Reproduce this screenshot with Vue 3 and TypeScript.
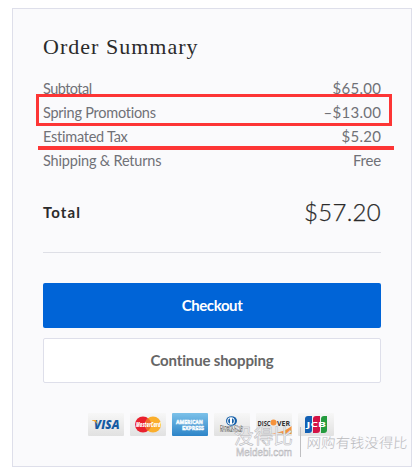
<script setup lang="ts">
interface Row {
  key: string
  label: string
  value: string
}

const rows: Row[] = [
  { key: 'subtotal', label: 'Subtotal', value: '$65.00' },
  { key: 'promo', label: 'Spring Promotions', value: '–$13.00' },
  { key: 'tax', label: 'Estimated Tax', value: '$5.20' },
  { key: 'shipping', label: 'Shipping & Returns', value: 'Free' },
]
</script>

<template>
  <main class="page">
    <section class="card">
      <h1 class="title">Order Summary</h1>
      <dl class="rows">
        <div v-for="row in rows" :key="row.key" class="row" :class="row.key">
          <dt>{{ row.label }}</dt>
          <dd>{{ row.value }}</dd>
        </div>
      </dl>
      <div class="total">
        <span class="total-label">Total</span>
        <span class="total-value">$57.20</span>
      </div>
      <button class="btn primary" type="button">Checkout</button>
      <button class="btn secondary" type="button">Continue shopping</button>
      <div class="payments">
        <svg class="pay" viewBox="0 0 36 23">
          <defs>
            <linearGradient id="plate" x1="0" y1="0" x2="0" y2="1">
              <stop offset="0" stop-color="#f7f7f7" />
              <stop offset="1" stop-color="#e1e1e1" />
            </linearGradient>
            <linearGradient id="amex" x1="0" y1="0" x2="0" y2="1">
              <stop offset="0" stop-color="#7cc1e9" />
              <stop offset="1" stop-color="#2c84c8" />
            </linearGradient>
          </defs>
          <rect width="36" height="23" rx="1" fill="url(#plate)" />
          <text x="6" y="16" textLength="25.500" lengthAdjust="spacingAndGlyphs" font-size="12" font-weight="800" font-style="italic" fill="#165ba3">VISA</text>
          <path d="M4 7h4l1.500 4.500C8 9.200 6.500 8 4 7.500z" fill="#f5a327" />
        </svg>
        <svg class="pay" viewBox="0 0 36 23">
          <rect width="36" height="23" rx="1" fill="url(#plate)" />
          <circle cx="13" cy="11.500" r="8" fill="#e9202e" />
          <circle cx="23" cy="11.500" r="8" fill="#faae2c" />
          <path d="M18 5.200a8 8 0 0 1 0 12.600a8 8 0 0 1 0-12.600z" fill="#ef6b2c" />
          <text x="6" y="14" textLength="24.500" lengthAdjust="spacingAndGlyphs" font-size="6.500" font-weight="800" font-style="italic" fill="#fff">MasterCard</text>
        </svg>
        <svg class="pay" viewBox="0 0 36 23">
          <rect width="36" height="23" rx="1" fill="url(#amex)" />
          <g font-size="6" font-weight="700" fill="#8cc3e8" stroke="#fff" stroke-width=".6">
            <text x="4" y="10.500" textLength="27" lengthAdjust="spacingAndGlyphs">AMERICAN</text>
            <text x="10" y="16.700" textLength="22" lengthAdjust="spacingAndGlyphs">EXPRESS</text>
          </g>
        </svg>
        <svg class="pay" viewBox="0 0 36 23">
          <rect width="36" height="23" rx="1" fill="url(#plate)" />
          <ellipse cx="17.500" cy="8" rx="5.500" ry="4.800" fill="#1760a9" />
          <circle cx="17" cy="8" r="3.800" fill="#fff" />
          <path d="M16 5.200a3 3 0 0 0 0 5.600zM18 5.200a3 3 0 0 1 0 5.600z" fill="#1760a9" />
          <g font-size="4.500" fill="#333">
            <text x="6" y="16" textLength="23" lengthAdjust="spacingAndGlyphs">Diners Club</text>
            <text x="6" y="19" font-size="3" textLength="23" lengthAdjust="spacingAndGlyphs">INTERNATIONAL</text>
          </g>
        </svg>
        <svg class="pay" viewBox="0 0 36 23">
          <rect width="36" height="23" rx="1" fill="url(#plate)" />
          <path d="M35.500 13v8H15c9-1.500 16-4 20.500-8z" fill="#f6933b" />
          <circle cx="17.500" cy="9.500" r="3" fill="#f6933b" />
          <g font-size="7.500" font-weight="700" fill="#333">
            <text x="1.500" y="12.500" textLength="13" lengthAdjust="spacingAndGlyphs">DISC</text>
            <text x="21" y="12.500" textLength="13" lengthAdjust="spacingAndGlyphs">VER</text>
          </g>
        </svg>
        <svg class="pay" viewBox="0 0 36 23">
          <rect width="36" height="23" rx="1" fill="url(#plate)" />
          <path d="M10 3h4v14q0 3-3 3H7V6q0-3 3-3z" fill="#1260b4" />
          <path d="M18 3h4v14q0 3-3 3h-4V6q0-3 3-3z" fill="#d31245" />
          <path d="M26 3h3v14q0 3-3 3h-3V6q0-3 3-3z" fill="#239b3e" />
          <text x="8.500" y="14" textLength="19.500" lengthAdjust="spacingAndGlyphs" font-size="6.500" font-weight="700" fill="#fff">JCB</text>
        </svg>
      </div>
    </section>
    <div class="mark-box"></div>
    <div class="mark-line"></div>
    <svg class="watermark" viewBox="0 0 186 38">
      <g class="wm">
        <text x="1" y="20" font-size="20" textLength="59" lengthAdjust="spacingAndGlyphs">没得比</text>
        <text x="3" y="32" font-size="11" textLength="56" lengthAdjust="spacingAndGlyphs">Meidebi.com</text>
      </g>
      <text class="slogan" x="75" y="24.500" textLength="101" lengthAdjust="spacingAndGlyphs" transform="skewX(-4)">网购有钱没得比</text>
      <path d="M67.500 3v30" stroke="#bfbfc2" />
    </svg>
  </main>
</template>

<style>
body {
  background: #fff;
}
</style>

<style scoped>
.page {
  position: relative;
  box-sizing: border-box;
  width: 420px;
  height: 476px;
  padding: 8px 8px 9px 12px;
  overflow: hidden;
  font-family: Lato, "Noto Sans CJK SC", sans-serif;
}
.card {
  box-sizing: border-box;
  display: flex;
  flex-direction: column;
  width: 400px;
  height: 459px;
  padding: 25px 30px 0;
  border: 1px solid #dedfea;
  background: #fafafc;
}
.title {
  margin: 0;
  height: 26px;
  font: 400 22px/26px "Liberation Serif", serif;
  letter-spacing: 1.02px;
  white-space: nowrap;
  color: #2b2b2b;
}
.rows {
  margin: 16px 0 0;
}
.row {
  display: flex;
  justify-content: space-between;
  align-items: baseline;
  height: 24px;
  font-size: 14.5px;
  line-height: 24px;
  color: #707177;
}
.row dt,
.row dd {
  margin: 0;
  white-space: nowrap;
}
.row dt {
  letter-spacing: -0.25px;
}
.row.subtotal dt {
  letter-spacing: -0.55px;
}
.row.shipping dt {
  letter-spacing: -0.18px;
}
.row dd {
  font-size: 15px;
  letter-spacing: 0.3px;
  margin-right: -0.3px;
}
.row.shipping dd {
  letter-spacing: -0.2px;
  margin-right: 0;
}
.total {
  display: flex;
  justify-content: space-between;
  align-items: center;
  box-sizing: border-box;
  height: 81px;
  padding-bottom: 1px;
  border-bottom: 1px solid #dedfe6;
  color: #2b2b2b;
}
.total-label {
  font-size: 15px;
  font-weight: 700;
  letter-spacing: 1.1px;
}
.total-value {
  font-size: 24px;
  font-weight: 300;
  letter-spacing: 0.3px;
  -webkit-text-stroke: 0.25px #2b2b2b;
}
.btn {
  box-sizing: border-box;
  height: 45px;
  padding: 0;
  border: 0;
  border-radius: 2px;
  font: 700 15px/43px Lato, sans-serif;
  letter-spacing: -0.15px;
}
.primary {
  margin-top: 30px;
  background: #0064d7;
  color: #fff;
  letter-spacing: -0.4px;
}
.secondary {
  margin-top: 10px;
  border: 1px solid #dedfea;
  background: #fff;
  color: #666;
}
.payments {
  display: flex;
  gap: 6px;
  margin: 30px 0 0 45px;
}
.pay {
  display: block;
  width: 36px;
  height: 23px;
  font-family: "Open Sans", sans-serif;
}
.mark-box {
  position: absolute;
  left: 36px;
  top: 94px;
  box-sizing: border-box;
  width: 356px;
  height: 32px;
  border: 3px solid #fd3535;
}
.mark-line {
  position: absolute;
  left: 38px;
  top: 146px;
  width: 356px;
  height: 4px;
  background: #fd3535;
}
.watermark {
  position: absolute;
  left: 233px;
  top: 424px;
  width: 186px;
  height: 38px;
}
.wm {
  fill: #f4f4f6;
  stroke: #b4b4b8;
  stroke-width: 0.5px;
  font-family: "Liberation Sans", "Noto Sans CJK SC", sans-serif;
}
.slogan {
  fill: #b9b9bd;
  font-size: 14px;
  font-weight: 300;
  font-family: "Noto Sans CJK SC", sans-serif;
}
</style>
